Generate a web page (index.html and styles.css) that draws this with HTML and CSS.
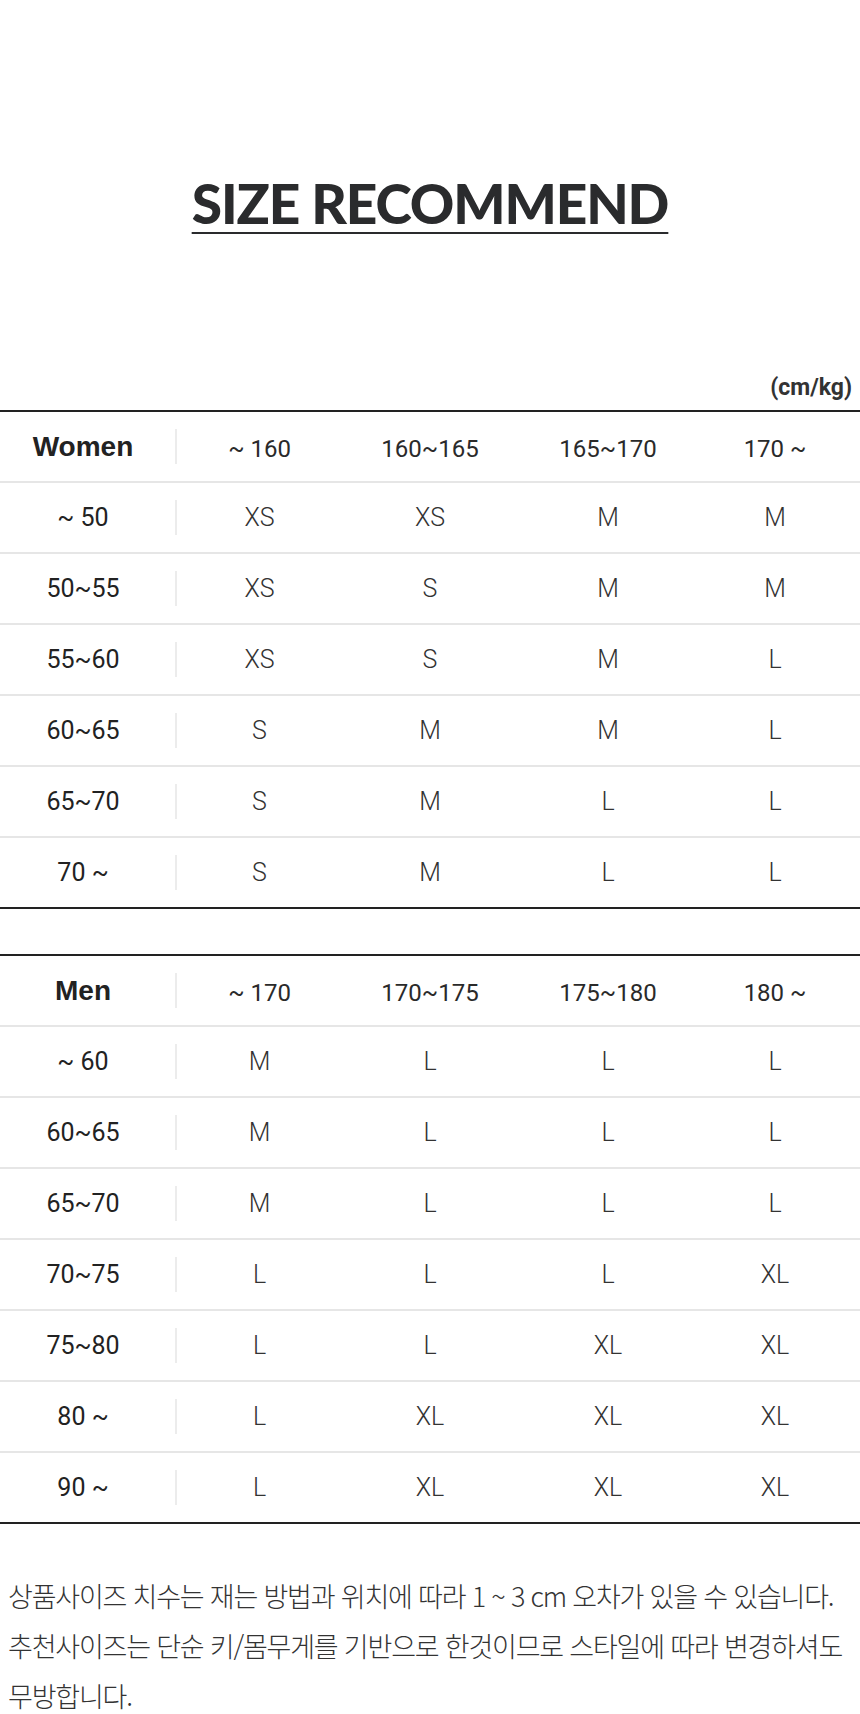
FILE: index.html
```html
<!DOCTYPE html>
<html lang="ko">
<head>
<meta charset="utf-8">
<title>Size Recommend</title>
<link rel="stylesheet" href="styles.css">
</head>
<body>
<main class="page">
  <header class="title-wrap">
    <h1 class="title">SIZE RECOMMEND</h1>
  </header>

  <p class="unit">(cm/kg)</p>

  <section class="size-table">
    <div class="row head">
      <div class="label-cell"><span class="label">Women</span><span class="divider"></span></div>
      <div class="cell">~ 160</div><div class="cell">160~165</div><div class="cell">165~170</div><div class="cell">170 ~</div>
    </div>
    <div class="row">
      <div class="label-cell"><span class="label">~ 50</span><span class="divider"></span></div>
      <div class="cell">XS</div><div class="cell">XS</div><div class="cell">M</div><div class="cell">M</div>
    </div>
    <div class="row">
      <div class="label-cell"><span class="label">50~55</span><span class="divider"></span></div>
      <div class="cell">XS</div><div class="cell">S</div><div class="cell">M</div><div class="cell">M</div>
    </div>
    <div class="row">
      <div class="label-cell"><span class="label">55~60</span><span class="divider"></span></div>
      <div class="cell">XS</div><div class="cell">S</div><div class="cell">M</div><div class="cell">L</div>
    </div>
    <div class="row">
      <div class="label-cell"><span class="label">60~65</span><span class="divider"></span></div>
      <div class="cell">S</div><div class="cell">M</div><div class="cell">M</div><div class="cell">L</div>
    </div>
    <div class="row">
      <div class="label-cell"><span class="label">65~70</span><span class="divider"></span></div>
      <div class="cell">S</div><div class="cell">M</div><div class="cell">L</div><div class="cell">L</div>
    </div>
    <div class="row">
      <div class="label-cell"><span class="label">70 ~</span><span class="divider"></span></div>
      <div class="cell">S</div><div class="cell">M</div><div class="cell">L</div><div class="cell">L</div>
    </div>
  </section>

  <section class="size-table men">
    <div class="row head">
      <div class="label-cell"><span class="label">Men</span><span class="divider"></span></div>
      <div class="cell">~ 170</div><div class="cell">170~175</div><div class="cell">175~180</div><div class="cell">180 ~</div>
    </div>
    <div class="row">
      <div class="label-cell"><span class="label">~ 60</span><span class="divider"></span></div>
      <div class="cell">M</div><div class="cell">L</div><div class="cell">L</div><div class="cell">L</div>
    </div>
    <div class="row">
      <div class="label-cell"><span class="label">60~65</span><span class="divider"></span></div>
      <div class="cell">M</div><div class="cell">L</div><div class="cell">L</div><div class="cell">L</div>
    </div>
    <div class="row">
      <div class="label-cell"><span class="label">65~70</span><span class="divider"></span></div>
      <div class="cell">M</div><div class="cell">L</div><div class="cell">L</div><div class="cell">L</div>
    </div>
    <div class="row">
      <div class="label-cell"><span class="label">70~75</span><span class="divider"></span></div>
      <div class="cell">L</div><div class="cell">L</div><div class="cell">L</div><div class="cell">XL</div>
    </div>
    <div class="row">
      <div class="label-cell"><span class="label">75~80</span><span class="divider"></span></div>
      <div class="cell">L</div><div class="cell">L</div><div class="cell">XL</div><div class="cell">XL</div>
    </div>
    <div class="row">
      <div class="label-cell"><span class="label">80 ~</span><span class="divider"></span></div>
      <div class="cell">L</div><div class="cell">XL</div><div class="cell">XL</div><div class="cell">XL</div>
    </div>
    <div class="row">
      <div class="label-cell"><span class="label">90 ~</span><span class="divider"></span></div>
      <div class="cell">L</div><div class="cell">XL</div><div class="cell">XL</div><div class="cell">XL</div>
    </div>
  </section>

  <p class="note">상품사이즈 치수는 재는 방법과 위치에 따라 1 ~ 3 cm 오차가 있을 수 있습니다.<br>추천사이즈는 단순 키/몸무게를 기반으로 한것이므로 스타일에 따라 변경하셔도<br>무방합니다.</p>
</main>
</body>
</html>
```

FILE: styles.css
```css
html, body {
  margin: 0;
  padding: 0;
  background: #ffffff;
}

.page {
  width: 860px;
  font-family: Roboto, "Liberation Sans", "Noto Sans CJK KR", sans-serif;
  color: #333333;
}

.title-wrap {
  padding-top: 170px;
  text-align: center;
}

.title {
  margin: 0;
  font-family: "Lato Black", Lato, "Liberation Sans", sans-serif;
  font-weight: 900;
  font-size: 55px;
  line-height: 66px;
  color: #2a2b2d;
  letter-spacing: -1.1px;
  text-decoration: underline;
  text-decoration-thickness: 2px;
  text-underline-offset: 8px;
}

.unit {
  margin: 137px 0 7px;
  padding-right: 8px;
  text-align: right;
  font-family: Roboto, "Liberation Sans", sans-serif;
  font-weight: 700;
  font-size: 23px;
  line-height: 30px;
  color: #333333;
}

.size-table {
  border-top: 2px solid #222222;
  border-bottom: 2px solid #222222;
}

.size-table.men {
  margin-top: 45px;
}

.row {
  display: grid;
  grid-template-columns: 177px 165px 176px 180px 154px;
  height: 69px;
  align-items: center;
  border-bottom: 2px solid #e6e6e6;
}

.row:last-child {
  border-bottom: none;
}

.label-cell {
  display: flex;
  align-items: center;
  height: 100%;
}

.label {
  width: 166px;
  text-align: center;
  font-size: 25px;
  font-weight: 400;
  color: #222222;
}

.divider {
  margin-left: 9px;
  width: 2px;
  height: 35px;
  background: #ececec;
}

.cell {
  text-align: center;
  font-size: 25px;
  font-weight: 300;
  color: #333333;
}

.head .label {
  font-family: "Liberation Sans", Arial, sans-serif;
  font-weight: 700;
  font-size: 28px;
  color: #222222;
}

.head .cell {
  padding-top: 4px;
  font-size: 24px;
  font-weight: 400;
  color: #2a2a2a;
}

.note {
  margin: 47px 0 0;
  padding: 0 8px;
  font-family: "Noto Sans CJK KR", sans-serif;
  font-weight: 300;
  font-size: 27px;
  line-height: 50px;
  letter-spacing: -1.2px;
  color: #333333;
  white-space: nowrap;
}
```
